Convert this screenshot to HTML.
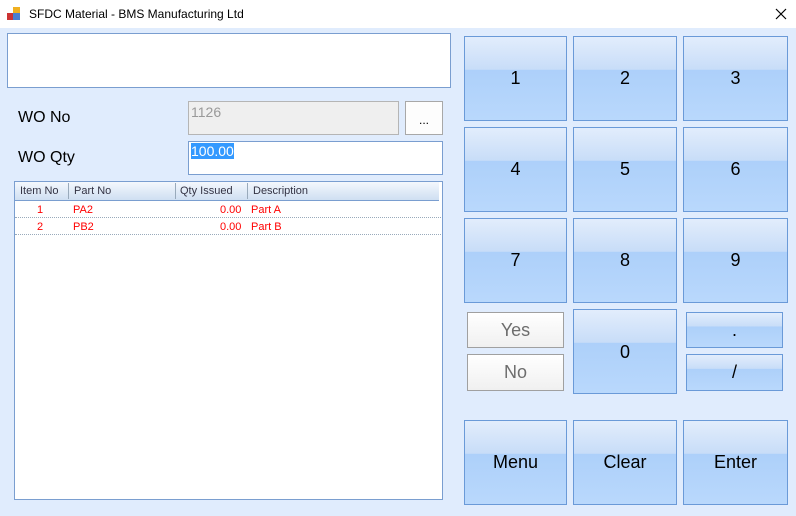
<!DOCTYPE html>
<html><head><style>
*{margin:0;padding:0;box-sizing:border-box}
body{width:796px;height:516px;background:#e0ecfd;font-family:"Liberation Sans",Arial,sans-serif;position:relative;overflow:hidden}
.tb{position:absolute;left:0;top:0;width:796px;height:28px;background:#fff;}
.tb .t{position:absolute;left:29px;top:7px;font-size:12px;color:#000}
.a{position:absolute}
.btn{position:absolute;border:1px solid #6a9ad8;background:linear-gradient(#e2edfc 0%,#c8ddf8 39%,#add0fa 40%,#b9d8fc 100%);display:flex;align-items:center;justify-content:center;font-size:18px;color:#000}
.wb{position:absolute;border:1px solid #a0a0a0;background:linear-gradient(#fff,#f0f0f0);display:flex;align-items:center;justify-content:center;font-size:18px;color:#6d6d6d}
.row{position:absolute;left:15px;width:426px;height:17px;border-bottom:1px dotted #9ab;font-size:11px;color:#f00}
.row span,.hd span{position:absolute;top:3px}
</style></head><body>
<div class="tb"><svg class="a" style="left:7px;top:7px" width="14" height="14"><rect x="0" y="6" width="7" height="7" fill="#c33"/><rect x="6" y="0" width="7" height="7" fill="#f0b020"/><rect x="6" y="6" width="7" height="7" fill="#4a7fd0"/></svg><div class="t">SFDC Material - BMS Manufacturing Ltd</div>
<svg class="a" style="left:775px;top:8px" width="12" height="12"><path d="M1 1L11 11M11 1L1 11" stroke="#000" stroke-width="1.2"/></svg></div>
<div class="a" style="left:7px;top:33px;width:444px;height:55px;background:#fff;border:1px solid #7a9ed0"></div>
<div class="a" style="left:18px;top:109px;font-size:16px">WO No</div>
<div class="a" style="left:18px;top:149px;font-size:16px">WO Qty</div>
<div class="a" style="left:188px;top:101px;width:211px;height:34px;background:#efefef;border:1px solid #b5b5b5;color:#999;font-size:14px;padding:2px 2px">1126</div>
<div class="a" style="left:405px;top:101px;width:38px;height:34px;background:#fdfdfd;border:1px solid #a8a8a8;font-size:12px;text-align:center;line-height:36px">...</div>
<div class="a" style="left:188px;top:141px;width:255px;height:34px;background:#fff;border:1px solid #7a9ed0;font-size:14px;padding:1px 2px"><span style="background:#3399ff;color:#fff">100.00</span></div>
<div class="a" style="left:14px;top:181px;width:429px;height:319px;background:#fff;border:1px solid #7a9ed0"></div>
<div class="hd a" style="left:15px;top:182px;width:424px;height:19px;background:linear-gradient(#f4f8fd,#cfdff2);border-bottom:1px solid #7a9ed0;font-size:11px;color:#334">
<span style="left:5px">Item No</span><span style="left:53px;border-left:1px solid #9ab;padding-left:5px;top:1px;height:16px;padding-top:2px">Part No</span><span style="left:160px;border-left:1px solid #9ab;padding-left:4px;top:1px;height:16px;padding-top:2px">Qty Issued</span><span style="left:232px;border-left:1px solid #9ab;padding-left:5px;top:1px;height:16px;padding-top:2px">Description</span></div>
<div class="row" style="top:201px"><span style="left:22px">1</span><span style="left:58px">PA2</span><span style="left:205px">0.00</span><span style="left:236px">Part A</span></div>
<div class="row" style="top:218px"><span style="left:22px">2</span><span style="left:58px">PB2</span><span style="left:205px">0.00</span><span style="left:236px">Part B</span></div>
<div class="btn" style="left:464px;top:36px;width:103px;height:85px">1</div>
<div class="btn" style="left:573px;top:36px;width:104px;height:85px">2</div>
<div class="btn" style="left:683px;top:36px;width:105px;height:85px">3</div>
<div class="btn" style="left:464px;top:127px;width:103px;height:85px">4</div>
<div class="btn" style="left:573px;top:127px;width:104px;height:85px">5</div>
<div class="btn" style="left:683px;top:127px;width:105px;height:85px">6</div>
<div class="btn" style="left:464px;top:218px;width:103px;height:85px">7</div>
<div class="btn" style="left:573px;top:218px;width:104px;height:85px">8</div>
<div class="btn" style="left:683px;top:218px;width:105px;height:85px">9</div>
<div class="wb" style="left:467px;top:312px;width:97px;height:36px">Yes</div>
<div class="wb" style="left:467px;top:354px;width:97px;height:37px">No</div>
<div class="btn" style="left:573px;top:309px;width:104px;height:85px;padding-top:2px">0</div>
<div class="btn" style="left:686px;top:312px;width:97px;height:36px">.</div>
<div class="btn" style="left:686px;top:354px;width:97px;height:37px">/</div>
<div class="btn" style="left:464px;top:420px;width:103px;height:85px">Menu</div>
<div class="btn" style="left:573px;top:420px;width:104px;height:85px">Clear</div>
<div class="btn" style="left:683px;top:420px;width:105px;height:85px">Enter</div>
</body></html>
